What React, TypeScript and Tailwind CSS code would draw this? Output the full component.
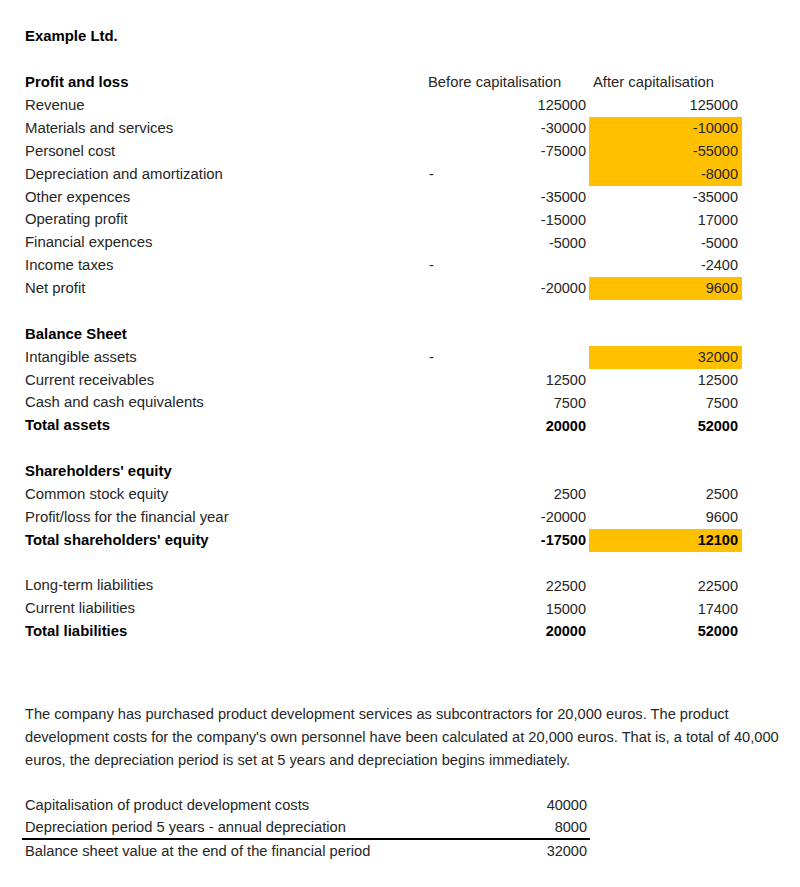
import React from "react";

type Row = {
  label?: string;
  before?: string;
  after?: string;
  bold?: boolean;
  hlAfter?: boolean;
  dash?: boolean;
};

const rows: Row[] = [
  { label: "Example Ltd.", bold: true },
  {},
  { label: "Profit and loss", bold: true, before: "Before capitalisation", after: "After capitalisation" },
  { label: "Revenue", before: "125000", after: "125000" },
  { label: "Materials and services", before: "-30000", after: "-10000", hlAfter: true },
  { label: "Personel cost", before: "-75000", after: "-55000", hlAfter: true },
  { label: "Depreciation and amortization", dash: true, after: "-8000", hlAfter: true },
  { label: "Other expences", before: "-35000", after: "-35000" },
  { label: "Operating profit", before: "-15000", after: "17000" },
  { label: "Financial expences", before: "-5000", after: "-5000" },
  { label: "Income taxes", dash: true, after: "-2400" },
  { label: "Net profit", before: "-20000", after: "9600", hlAfter: true },
  {},
  { label: "Balance Sheet", bold: true },
  { label: "Intangible assets", dash: true, after: "32000", hlAfter: true },
  { label: "Current receivables", before: "12500", after: "12500" },
  { label: "Cash and cash equivalents", before: "7500", after: "7500" },
  { label: "Total assets", before: "20000", after: "52000", bold: true },
  {},
  { label: "Shareholders' equity", bold: true },
  { label: "Common stock equity", before: "2500", after: "2500" },
  { label: "Profit/loss for the financial year", before: "-20000", after: "9600" },
  { label: "Total shareholders' equity", before: "-17500", after: "12100", bold: true, hlAfter: true },
  {},
  { label: "Long-term liabilities", before: "22500", after: "22500" },
  { label: "Current liabilities", before: "15000", after: "17400" },
  { label: "Total liabilities", before: "20000", after: "52000", bold: true },
];

function SheetRow({ r, index }: { r: Row; index: number }) {
  const isHeader = index === 2;
  const tone = r.bold ? "font-bold text-black" : "text-[#262626]";
  return (
    <div className="grid h-[22.875px] grid-cols-[404px_163px_153px] items-center">
      <div className={`pl-[3px] text-[14.9px] whitespace-nowrap ${tone}`}>{r.label}</div>
      {isHeader ? (
        <div className="pl-[2px] text-[14.8px] whitespace-nowrap text-[#262626]">{r.before}</div>
      ) : r.dash ? (
        <div className="pl-[3px] text-[#262626]">-</div>
      ) : (
        <div className={`flex h-full items-center justify-end pr-[3px] ${tone}`}>{r.before}</div>
      )}
      {isHeader ? (
        <div className="pl-[4px] text-[14.8px] whitespace-nowrap text-[#262626]">{r.after}</div>
      ) : (
        <div
          className={`flex h-full items-center justify-end pr-[4px] ${tone} ${
            r.hlAfter ? "bg-[#ffc000]" : ""
          }`}
        >
          {r.after}
        </div>
      )}
    </div>
  );
}

export default function App() {
  return (
    <div
      className="min-h-screen bg-white pl-[22px] pt-[25.5px] text-[14.5px] leading-none"
      style={{ fontFamily: '"Liberation Sans", Arial, sans-serif' }}
    >
      {/* Sheet */}
      <div className="flex flex-col">
        {rows.map((r, i) => (
          <SheetRow key={i} r={r} index={i} />
        ))}
      </div>

      {/* Notes */}
      <p className="mt-[59.5px] pl-[3px] text-[14.65px] leading-[23px] whitespace-nowrap text-[#262626]">
        The company has purchased product development services as subcontractors for 20,000 euros. The product
        <br />
        development costs for the company's own personnel have been calculated at 20,000 euros. That is, a total of 40,000
        <br />
        euros, the depreciation period is set at 5 years and depreciation begins immediately.
      </p>

      {/* Capitalisation calc */}
      <div className="mt-[22px] w-[568px] text-[#262626]">
        <div className="grid h-[23px] grid-cols-[404px_164px] items-center">
          <div className="pl-[3px] text-[14.7px] whitespace-nowrap">Capitalisation of product development costs</div>
          <div className="pr-[3px] text-right">40000</div>
        </div>
        <div className="grid h-[23px] grid-cols-[404px_164px] items-center border-b-2 border-black">
          <div className="pl-[3px] text-[14.7px] whitespace-nowrap">Depreciation period 5 years - annual depreciation</div>
          <div className="pr-[3px] text-right">8000</div>
        </div>
        <div className="grid h-[23px] grid-cols-[404px_164px] items-center">
          <div className="pl-[3px] text-[14.7px] whitespace-nowrap">Balance sheet value at the end of the financial period</div>
          <div className="pr-[3px] text-right">32000</div>
        </div>
      </div>
    </div>
  );
}
